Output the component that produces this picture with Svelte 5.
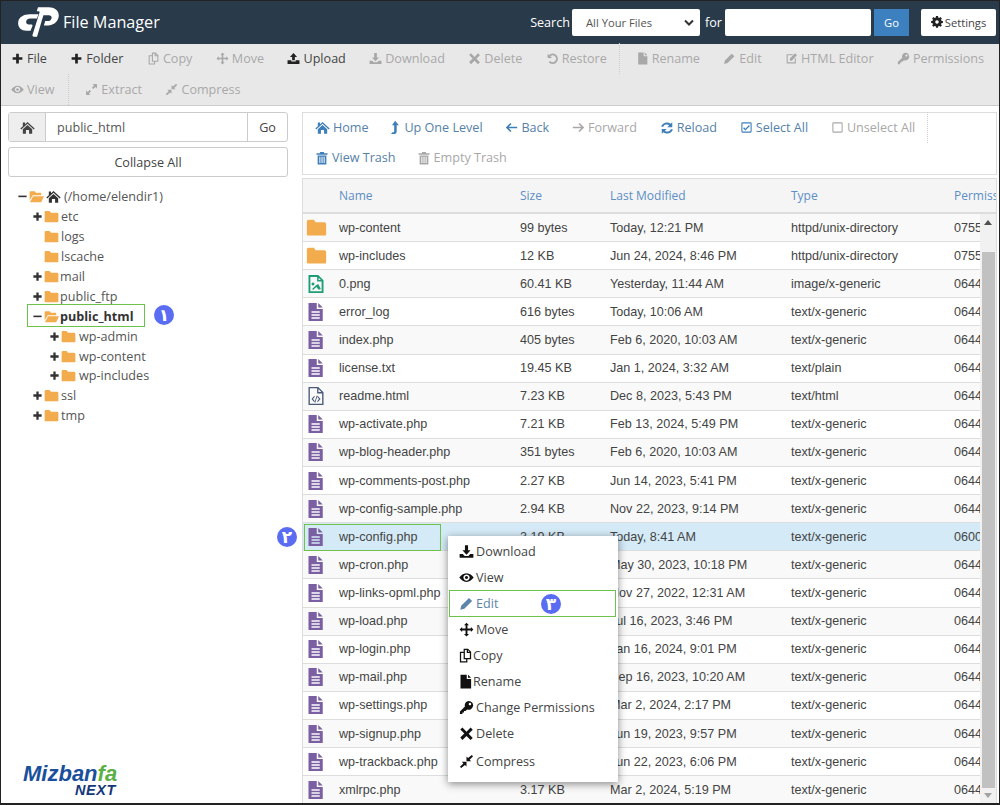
<script>
    const paths = {
        plus: 'M9.500 3h5v6.500H21v5h-6.500V21h-5v-6.500H3v-5h6.500z',
        copy: 'M9 1h7l5 5v12h-6v5H3V6h6z M5 8v13h8v-3H9V8z M11 3v13h8V8h-5V3z M16 3.500V6h2.500z',
        move: 'M12 1l4 4h-2.500v5.500H19V8l4 4-4 4v-2.500h-5.500V19H16l-4 4-4-4h2.500v-5.500H5V16l-4-4 4-4v2.500h5.500V5H8z',
        upload: 'M12 2l6.500 7H14.500v6h-5V9H5.500z M1 15h7v2.500h8V15h7v7H1z',
        download: 'M9.500 2h5v8h4l-6.500 7-6.500-7h4z M1 16h5l3 3h6l3-3h5v6H1z',
        del: 'M5.500 2.500L12 9l6.500-6.500 3.500 3.500-6.500 6.500 6.500 6.500-3.500 3.500-6.500-6.500-6.500 6.500L2 18.500 8.500 12 2 5.500z',
        restore: 'M3 3v8h8L8 8a6.200 6.200 0 1 1-.5 8.500l-2.600 2.200A9.700 9.700 0 1 0 5.500 5.500z',
        file: 'M4 1h10v7h7v15H4z M16 1l5 5h-5z',
        pencil: 'M2 22l1.500-6.500L16 3l5 5L8.500 20.500z',
        pencilbox: 'M3 4h12l-2 2H5v13h13v-6l2-2v10H3z M9 16v-4l9.500-9.500 3.500 3.500L12.500 16z',
        key: 'M15.500 1.500a7 7 0 1 1-2.500 13.500L10.500 17.500H8v2.500H5.500v2.500H1.500v-4l8-8a7 7 0 0 1 6-9z M17.500 4.500a2 2 0 1 0 .01 0z',
        eye: 'M12 5c5 0 9 3.500 11.500 7-2.500 3.500-6.500 7-11.500 7S3 15.500.5 12C3 8.500 7 5 12 5z M12 7a5 5 0 1 0 .01 0z M12 9.500a2.500 2.500 0 1 1-.01 0z',
        extract: 'M14 2h8v8l-2.800-2.800-4 4-2.400-2.400 4-4z M10 22H2v-8l2.800 2.800 4-4 2.400 2.400-4 4z',
        compress: 'M20.500 1.500l2 2-5.500 5.500 2.500 2.500h-7.500V4l2.500 2.500z M3.500 22.500l-2-2L7 15l-2.500-2.500H12V20l-2.500-2.500z',
        home: 'M12 3l11.500 10.500-1.500 1.700L12 6 2 15.200.5 13.500 4.500 9.900V4h3.500v2.700z M12 8l7.500 6.700V22H14.500v-6h-5v6H4.500v-7.300z',
        up: 'M13 1l6 7.500h-3.500V18c0 3-1.500 4.500-4.500 4.500H6.500l2-3h1c1.500 0 2-.5 2-1.500V8.500H8z',
        left: 'M10 3.500l2 2-5 5h15.500v3H7l5 5-2 2L1.500 12z',
        right: 'M14 3.500l-2 2 5 5H1.500v3H17l-5 5 2 2 8.500-8.500z',
        reload: 'M21 2v8.500h-8.500l3.200-3.200A6.500 6.500 0 0 0 5.500 10H2A10 10 0 0 1 18.200 4.800z M3 22v-8.500h8.500l-3.200 3.200A6.500 6.500 0 0 0 18.500 14H22A10 10 0 0 1 5.800 19.200z',
        check: 'M4.500 2.500h15a2 2 0 0 1 2 2v15a2 2 0 0 1-2 2h-15a2 2 0 0 1-2-2v-15a2 2 0 0 1 2-2z M4.500 4.500v15h15v-15z M10 17.500L5.800 13.300l1.700-1.700L10 14.100l6.500-6.500 1.700 1.700z',
        square: 'M4.500 2.500h15a2 2 0 0 1 2 2v15a2 2 0 0 1-2 2h-15a2 2 0 0 1-2-2v-15a2 2 0 0 1 2-2z M4.500 4.500v15h15v-15z',
        trash: 'M9 1.500h6l1 2.500h5.500v2.500h-19V4H8z M4.500 7.500h15V23h-15z M7.500 10v10.500h1.700V10z M11.200 10v10.500h1.700V10z M14.800 10v10.500h1.700V10z',
        gear: 'M10 0h4l.5 3 2 .8L19 2l2.800 2.800L20 7.300l.8 2 3 .5v4l-3 .5-.8 2 1.800 2.500L19 21.600l-2.500-1.800-2 .8-.5 3h-4l-.5-3-2-.8L5 21.600 2.200 18.800 4 16.300l-.8-2-3-.5v-4l3-.5.8-2L2.200 4.800 5 2l2.500 1.800 2-.8z M12 8.300a3.500 3.500 0 1 0 .01 0z',
        folder: 'M1 5a2 2 0 0 1 2-2h6l2 3h10a2 2 0 0 1 2 2v12a1 1 0 0 1-1 1H2a1 1 0 0 1-1-1z',
        open: 'M1 5a1.500 1.500 0 0 1 1.500-1.500H9L11 6h8.500V10H6L1 18z M6.500 11.500H24L19.500 21H1.500z',
        doc: 'M2 0h11v8h8v16H2z M15 0l6 6h-6z M6 11v2h11v-2z M6 15v2h11v-2z M6 19v2h11v-2z',
        png: 'M2 0h13l7 7v17H2z M4.500 2.500v19h15V8.500h-6v-6z M15.500 3.500v3h3z M8 10a2 2 0 1 1-.01 0z M15 12l3.500 6.500-3 1-3-3.500-4 3.500-2-.5 5.500-5.500z',
        html: 'M2 0h13l7 7v17H2z M3.800 1.800v20.400h16.400V8.500h-6.700V1.800z M15.300 2.800v3.900h3.900z M9.500 12l1 1-2.500 3 2.500 3-1 1-3.500-4z M14.500 12l3.500 4-3.500 4-1-1 2.500-3-2.500-3z M12.800 11.500h1.100l-2.700 9h-1.100z',
        minus: 'M3 10h18v3.500H3z',
    }

    const fileTools = [
        { name: 'plus', label: 'File', on: true },
        { name: 'plus', label: 'Folder', on: true },
        { name: 'copy', label: 'Copy' },
        { name: 'move', label: 'Move' },
        { name: 'upload', label: 'Upload', on: true },
        { name: 'download', label: 'Download' },
        { name: 'del', label: 'Delete' },
        { name: 'restore', label: 'Restore' },
    ]
    const editTools = [
        { name: 'file', label: 'Rename' },
        { name: 'pencil', label: 'Edit' },
        { name: 'pencilbox', label: 'HTML Editor' },
        { name: 'key', label: 'Permissions' },
    ]
    const navTools = [
        { name: 'home', label: 'Home', on: true, size: 15 },
        { name: 'up', label: 'Up One Level', on: true, size: 15, narrow: true },
        { name: 'left', label: 'Back', on: true },
        { name: 'right', label: 'Forward' },
        { name: 'reload', label: 'Reload', on: true, size: 14 },
        { name: 'check', label: 'Select All', on: true },
        { name: 'square', label: 'Unselect All' },
    ]

    const tree = [
        { label: '(/home/elendir1)', level: 0, sign: 'minus', root: true },
        { label: 'etc', level: 1, sign: 'plus', wide: true },
        { label: 'logs', level: 1, wide: true },
        { label: 'lscache', level: 1, wide: true },
        { label: 'mail', level: 1, sign: 'plus' },
        { label: 'public_ftp', level: 1, sign: 'plus' },
        { label: 'public_html', level: 1, sign: 'minus', open: true, bold: true },
        { label: 'wp-admin', level: 2, sign: 'plus' },
        { label: 'wp-content', level: 2, sign: 'plus' },
        { label: 'wp-includes', level: 2, sign: 'plus' },
        { label: 'ssl', level: 1, sign: 'plus', wide: true },
        { label: 'tmp', level: 1, sign: 'plus', wide: true },
    ]

    const dirType = 'httpd/unix-directory'
    const gen = 'text/x-generic'
    const files = [
        ['folder', 'wp-content', '99 bytes', 'Today, 12:21 PM', dirType, '0755'],
        ['folder', 'wp-includes', '12 KB', 'Jun 24, 2024, 8:46 PM', dirType, '0755'],
        ['png', '0.png', '60.41 KB', 'Yesterday, 11:44 AM', 'image/x-generic', '0644'],
        ['doc', 'error_log', '616 bytes', 'Today, 10:06 AM', gen, '0644'],
        ['doc', 'index.php', '405 bytes', 'Feb 6, 2020, 10:03 AM', gen, '0644'],
        ['doc', 'license.txt', '19.45 KB', 'Jan 1, 2024, 3:32 AM', 'text/plain', '0644'],
        ['html', 'readme.html', '7.23 KB', 'Dec 8, 2023, 5:43 PM', 'text/html', '0644'],
        ['doc', 'wp-activate.php', '7.21 KB', 'Feb 13, 2024, 5:49 PM', gen, '0644'],
        ['doc', 'wp-blog-header.php', '351 bytes', 'Feb 6, 2020, 10:03 AM', gen, '0644'],
        ['doc', 'wp-comments-post.php', '2.27 KB', 'Jun 14, 2023, 5:41 PM', gen, '0644'],
        ['doc', 'wp-config-sample.php', '2.94 KB', 'Nov 22, 2023, 9:14 PM', gen, '0644'],
        ['doc', 'wp-config.php', '3.19 KB', 'Today, 8:41 AM', gen, '0600'],
        ['doc', 'wp-cron.php', '5.51 KB', 'May 30, 2023, 10:18 PM', gen, '0644'],
        ['doc', 'wp-links-opml.php', '2.5 KB', 'Nov 27, 2022, 12:31 AM', gen, '0644'],
        ['doc', 'wp-load.php', '3.93 KB', 'Jul 16, 2023, 3:46 PM', gen, '0644'],
        ['doc', 'wp-login.php', '50.22 KB', 'Jan 16, 2024, 9:01 PM', gen, '0644'],
        ['doc', 'wp-mail.php', '8.52 KB', 'Sep 16, 2023, 10:20 AM', gen, '0644'],
        ['doc', 'wp-settings.php', '29.4 KB', 'Mar 2, 2024, 2:17 PM', gen, '0644'],
        ['doc', 'wp-signup.php', '34.39 KB', 'Jun 19, 2023, 9:57 PM', gen, '0644'],
        ['doc', 'wp-trackback.php', '4.89 KB', 'Jun 22, 2023, 6:06 PM', gen, '0644'],
        ['doc', 'xmlrpc.php', '3.17 KB', 'Mar 2, 2024, 5:19 PM', gen, '0644'],
    ]

    const menu = [
        { name: 'download', label: 'Download' },
        { name: 'eye', label: 'View' },
        { name: 'pencil', label: 'Edit', active: true },
        { name: 'move', label: 'Move' },
        { name: 'copy', label: 'Copy', tight: true },
        { name: 'file', label: 'Rename', tight: true },
        { name: 'key', label: 'Change Permissions' },
        { name: 'del', label: 'Delete' },
        { name: 'compress', label: 'Compress' },
    ]
</script>

{#snippet icon(name, size = 13)}
    <svg class="icon" width={size} height={size} viewBox="0 0 24 24" fill="currentColor" fill-rule="evenodd" aria-hidden="true">
        <path d={paths[name]} />
    </svg>
{/snippet}

{#snippet tool(item)}
    <span class="tool" class:on={item.on} class:narrow={item.narrow}>
        {@render icon(item.name, item.size || 13)}
        {item.label}
    </span>
{/snippet}

<div class="page">
    <header>
        <div class="brand">
            <svg width="41" height="30" viewBox="0 0 42 30" fill="#fff" aria-hidden="true">
                <path d="M12 7h9l-1.600 4.500h-7c-2.200 0-3.400 1-3.900 2.500-.6 2 .5 3.500 2.500 3.500h2.500c1.100 0 1.600.7 1.300 1.700L12.800 24H8.500C2.800 24-1 19.700.4 14 1.500 9.800 6 7 12 7z" />
                <path d="M20.500 0h11C38 0 43 4 41.500 10.500 40.300 15.500 36 18.500 31 18.500h-4.500l1.400-4.500h2.600c2 0 3.300-1 3.800-2.700.5-2-.6-3.300-2.600-3.300H26L19.500 30h-3.200c-1.200 0-1.800-.8-1.400-2L22 5.500c.3-1-.2-1.500-1.200-1.500h-1.600z" />
            </svg>
            <span class="title">File Manager</span>
        </div>
        <div class="search">
            <span class="lab">Search</span>
            <div class="selectwrap">
                <select><option>All Your Files</option></select>
                <svg class="chev" width="10" height="8" viewBox="0 0 10 8" aria-hidden="true"><path d="M1 1.500l4 4 4-4" fill="none" stroke="#333" stroke-width="2" /></svg>
            </div>
            <span class="lab for">for</span>
            <input class="q" type="text" />
            <button class="go">Go</button>
            <button class="settings">{@render icon('gear', 12)} Settings</button>
        </div>
    </header>

    <div class="toolbar">
        <div class="row">
            {#each fileTools as item}{@render tool(item)}{/each}
            <i class="sep first"></i>
            {#each editTools as item}{@render tool(item)}{/each}
        </div>
        <div class="row">
            {@render tool({ name: 'eye', label: 'View' })}
            <i class="sep second"></i>
            {@render tool({ name: 'extract', label: 'Extract' })}
            {@render tool({ name: 'compress', label: 'Compress' })}
        </div>
    </div>

    <div class="main">
        <aside>
            <div class="pathbar">
                <span class="addon">{@render icon('home', 15)}</span>
                <input type="text" value="public_html" />
                <span class="pathgo">Go</span>
            </div>
            <button class="collapse">Collapse All</button>
            <ul class="tree">
                {#each tree as node}
                    <li class="lv{node.level}" class:bold={node.bold} class:wide={node.wide}>
                        <span class="sign">
                            {#if node.sign}{@render icon(node.sign, 11)}{/if}
                        </span>
                        <span class="fold">{@render icon(node.open || node.root ? 'open' : 'folder', 15)}</span>
                        {#if node.root}<span class="roothome">{@render icon('home', 15)}</span>{/if}
                        <span>{node.label}</span>
                    </li>
                {/each}
            </ul>
            <div class="mark">
                <div class="mz">Mizban<em>fa</em></div>
                <div class="nx">NEXT</div>
            </div>
        </aside>

        <section>
            <div class="actions">
                <div class="row">
                    {#each navTools as item}{@render tool(item)}{/each}
                    <i class="sep third"></i>
                </div>
                <div class="row trash">
                    {@render tool({ name: 'trash', label: 'View Trash', on: true, size: 14 })}
                    {@render tool({ name: 'trash', label: 'Empty Trash', size: 14 })}
                </div>
            </div>

            <div class="listing">
                <div class="line head">
                    <span></span><span>Name</span><span>Size</span><span>Last Modified</span><span>Type</span><span>Permissions</span>
                </div>
                <div class="body">
                    <div class="rows">
                        {#each files as f, i}
                            <div class="line" class:odd={i % 2 === 0} class:picked={f[1] === 'wp-config.php'}>
                                <span class="ficon {f[0]}">{@render icon(f[0], f[0] === 'folder' ? 21 : 18)}</span>
                                <span>{f[1]}</span>
                                <span>{f[2]}</span>
                                <span>{f[3]}</span>
                                <span>{f[4]}</span>
                                <span>{f[5]}</span>
                            </div>
                        {/each}
                    </div>
                    <div class="scroll">
                        <i class="arrow up"></i>
                        <i class="thumb"></i>
                        <i class="arrow down"></i>
                    </div>
                </div>
            </div>
        </section>
    </div>

    <ul class="menu">
        {#each menu as m}
            <li class:active={m.active} class:tight={m.tight}>{@render icon(m.name, 15)}<span>{m.label}</span></li>
        {/each}
    </ul>

    <i class="hl one"></i>
    <i class="hl two"></i>
    <i class="hl three"></i>
    <b class="badge b1">۱</b>
    <b class="badge b2">۲</b>
    <b class="badge b3">۳</b>
</div>

<style>
    :global(body) {
        margin: 0;
        background: #fff;
    }
    .page {
        position: relative;
        width: 1000px;
        height: 805px;
        overflow: hidden;
        font-family: 'Open Sans', sans-serif;
        font-size: 12.6px;
        color: #333;
        display: flex;
        flex-direction: column;
    }
    .page::after {
        content: '';
        position: absolute;
        inset: 0;
        border: 1px solid #222;
        border-bottom-width: 2px;
        pointer-events: none;
    }
    header {
        height: 44px;
        flex: none;
        background: #293a4a;
        display: flex;
        align-items: center;
        justify-content: space-between;
        padding: 0 4px 0 18px;
    }
    .brand {
        display: flex;
        align-items: center;
        gap: 4px;
    }
    .title {
        color: #fff;
        font-size: 16.2px;
    }
    .search {
        display: flex;
        align-items: center;
    }
    .lab {
        color: #fff;
        font-size: 12.6px;
        margin-right: 2px;
    }
    .lab.for {
        margin: 0 3px 0 5px;
    }
    .selectwrap {
        position: relative;
        display: flex;
    }
    select {
        appearance: none;
        width: 128px;
        height: 27px;
        border: none;
        border-radius: 2px;
        background: #fff;
        padding: 0 14px;
        font: 11.2px 'Open Sans', sans-serif;
        color: #555;
    }
    .chev {
        position: absolute;
        right: 6px;
        top: 10px;
    }
    .q {
        width: 146px;
        height: 27px;
        box-sizing: border-box;
        border: none;
        border-radius: 2px;
        background: #fff;
    }
    .go {
        width: 35px;
        height: 27px;
        margin-left: 3px;
        border: none;
        background: #3c80bf;
        color: #fff;
        font: 11.2px 'Open Sans', sans-serif;
    }
    .settings {
        width: 75px;
        height: 27px;
        margin-left: 12px;
        padding: 0;
        border: none;
        border-radius: 2px;
        background: #fff;
        color: #444;
        font: 11.2px 'Open Sans', sans-serif;
        display: flex;
        align-items: center;
        justify-content: center;
        gap: 2px;
    }
    .settings .icon {
        color: #222;
    }
    .toolbar {
        height: 62px;
        flex: none;
        box-sizing: border-box;
        background: #e8e8e8;
        border-bottom: 1px solid #ccc;
        padding: 0 0 0 11px;
    }
    .row {
        display: flex;
        align-items: center;
        gap: 23.4px;
        height: 28px;
        margin-bottom: 3px;
    }
    .tool {
        display: inline-flex;
        align-items: center;
        gap: 3px;
        color: #a8a8a8;
        white-space: nowrap;
    }
    .tool.on {
        color: #444;
    }
    .tool.on .icon {
        color: #222;
    }
    .tool.narrow .icon {
        margin: 0 -1px 0 -4px;
    }
    .sep {
        width: 0;
        height: 31px;
        border-left: 1px dotted #ccc;
    }
    .sep.first {
        margin: 0 -8px 0 -11px;
    }
    .sep.second {
        margin: 0 -7px 0 -10px;
    }
    .sep.third {
        margin-left: -11px;
    }
    .main {
        flex: 1;
        min-height: 0;
        display: flex;
        gap: 14px;
        padding: 6px 3px 2px 8px;
    }
    aside {
        width: 280px;
        flex: none;
        display: flex;
        flex-direction: column;
    }
    .pathbar {
        height: 30px;
        box-sizing: border-box;
        border: 1px solid #ccc;
        border-radius: 3px;
        display: flex;
        align-items: stretch;
    }
    .addon {
        width: 36px;
        background: #eee;
        border-right: 1px solid #ccc;
        color: #444;
        display: flex;
        align-items: center;
        justify-content: center;
    }
    .pathbar input {
        flex: 1;
        min-width: 0;
        border: none;
        outline: none;
        padding: 0 11px;
        font: 12.6px 'Open Sans', sans-serif;
        color: #555;
    }
    .pathgo {
        width: 39px;
        border-left: 1px solid #ccc;
        display: flex;
        align-items: center;
        justify-content: center;
        color: #444;
    }
    .collapse {
        height: 30px;
        margin-top: 5px;
        border: 1px solid #ccc;
        border-radius: 3px;
        background: #fff;
        font: 12.6px 'Open Sans', sans-serif;
        color: #444;
    }
    .tree {
        list-style: none;
        margin: 10px 0 0;
        padding: 0;
        color: #555;
    }
    .tree li {
        height: 19.9px;
        display: flex;
        align-items: center;
        white-space: nowrap;
    }
    .tree .lv0 {
        padding-left: 9px;
    }
    .tree .lv1 {
        padding-left: 24px;
    }
    .tree .lv2 {
        padding-left: 41px;
    }
    .sign {
        width: 11px;
        flex: none;
        display: flex;
        color: #333;
    }
    .fold {
        display: flex;
        color: #f2ab4d;
        margin-left: 1px;
        margin-right: 1px;
    }
    .roothome {
        display: flex;
        margin: 0 3px 0 1px;
        color: #333;
    }
    .tree .wide .fold {
        margin-right: 2px;
    }
    .tree .lv2 .fold {
        margin-right: 3px;
    }
    .tree .bold {
        font-weight: 700;
        color: #333;
    }
    .mark {
        margin-top: auto;
        margin-bottom: 6px;
        margin-left: 15px;
        width: 99px;
        font-family: 'Liberation Sans', sans-serif;
        font-style: italic;
        font-weight: 700;
        color: #1a4f9c;
        line-height: 1;
    }
    .mz {
        font-size: 22px;
    }
    .mz em {
        color: #5bb044;
    }
    .nx {
        margin-top: -2px;
        padding-right: 6px;
        text-align: right;
        font-size: 14.5px;
        letter-spacing: 0.6px;
        color: #15387a;
    }
    section {
        flex: 1;
        min-width: 0;
        display: flex;
        flex-direction: column;
    }
    .actions {
        height: 63px;
        flex: none;
        box-sizing: border-box;
        border: 1px solid #ddd;
        padding: 0 0 0 12px;
    }
    .actions .row {
        height: 29px;
        margin-bottom: 1px;
        gap: 22.8px;
    }
    .actions .row.trash {
        gap: 21px;
    }
    .actions .tool.on .icon {
        color: #3f7fb9;
    }
    .actions .tool.on {
        color: #5681a8;
    }
    .listing {
        flex: 1;
        min-height: 0;
        margin-top: 3px;
        border: 1px solid #ddd;
        border-bottom: none;
        display: flex;
        flex-direction: column;
        font-family: 'Liberation Sans', sans-serif;
        font-size: 12.6px;
    }
    .line {
        display: grid;
        grid-template-columns: 36px 181px 90px 181px 163px 60px;
        align-items: center;
        white-space: nowrap;
        height: 28.12px;
        box-sizing: border-box;
        border-bottom: 1px solid #ddd;
        color: #444;
    }
    .line.odd {
        background: #f9f9f9;
    }
    .line.picked {
        background: #d4eaf6;
    }
    .head {
        height: 35px;
        flex: none;
        background: #f5f5f5;
        border-bottom: 2px solid #ddd;
        color: #5b8fc5;
        overflow: hidden;
        font-family: 'Open Sans', sans-serif;
        font-size: 12px;
    }
    .body {
        flex: 1;
        min-height: 0;
        display: flex;
    }
    .rows {
        flex: 1;
        min-width: 0;
        overflow: hidden;
    }
    .ficon {
        display: flex;
        justify-content: center;
        padding-right: 10px;
        color: #7a5fa3;
    }
    .ficon.folder {
        color: #f2ab4d;
    }
    .ficon.png {
        color: #1f9d77;
    }
    .ficon.html {
        color: #4a5a78;
    }
    .scroll {
        width: 16px;
        flex: none;
        background: #f1f1f1;
        display: flex;
        flex-direction: column;
        align-items: center;
        padding: 6px 0 5px;
        box-sizing: border-box;
    }
    .arrow {
        width: 0;
        height: 0;
        border: 4px solid transparent;
    }
    .arrow.up {
        border-top: none;
        border-bottom: 5px solid #505050;
    }
    .arrow.down {
        border-bottom: none;
        border-top: 5px solid #a3a3a3;
    }
    .thumb {
        width: 13px;
        flex: 1;
        margin: 27px 0 5px;
        background: #c1c1c1;
    }
    .menu {
        position: absolute;
        left: 448px;
        top: 536px;
        width: 170px;
        height: 246px;
        box-sizing: border-box;
        margin: 0;
        padding: 2px 0;
        list-style: none;
        background: #fff;
        box-shadow: 0 2px 8px rgba(0, 0, 0, 0.45);
        color: #444;
    }
    .menu li {
        height: 26.1px;
        display: flex;
        align-items: center;
        gap: 2px;
        padding-left: 11px;
        white-space: nowrap;
    }
    .menu li:last-child {
        margin-top: 2px;
    }
    .menu .tight {
        gap: 0;
        margin-left: -1px;
    }
    .menu .icon {
        color: #111;
    }
    .menu .active,
    .menu .active .icon {
        color: #5d84ab;
    }
    .hl {
        position: absolute;
        box-sizing: border-box;
        border: 1px solid #6cc24a;
        pointer-events: none;
    }
    .hl.one {
        left: 27px;
        top: 304px;
        width: 118px;
        height: 23px;
    }
    .hl.two {
        left: 304px;
        top: 524px;
        width: 137px;
        height: 27px;
    }
    .hl.three {
        left: 449px;
        top: 590px;
        width: 167px;
        height: 27px;
    }
    .badge {
        position: absolute;
        width: 20px;
        height: 20px;
        border-radius: 50%;
        background: #5a6cf2;
        color: #fff;
        font: 700 17px/20px 'DejaVu Sans', sans-serif;
        text-align: center;
    }
    .b1 {
        left: 154px;
        top: 305px;
    }
    .b2 {
        left: 277px;
        top: 527px;
    }
    .b3 {
        left: 541px;
        top: 594px;
    }
</style>
